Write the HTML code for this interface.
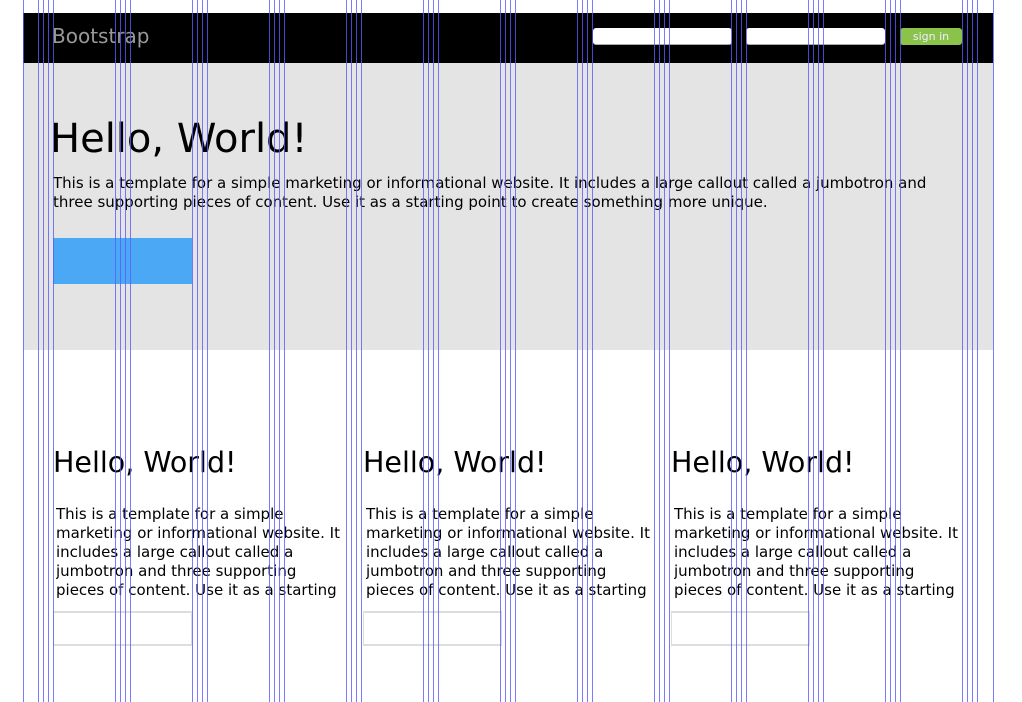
<!DOCTYPE html>
<html><head><meta charset="utf-8"><style>
*{margin:0;padding:0;box-sizing:border-box}
body{width:1022px;height:702px;overflow:hidden;background:#fff;font-family:"DejaVu Sans","Liberation Sans",sans-serif;position:relative}
.nav{position:absolute;left:23px;top:13px;width:970px;height:50px;background:#000}
.brand{position:absolute;left:29px;top:11px;font-size:20px;color:#999}
.inp{position:absolute;top:15px;height:17px;width:139px;background:#fff;border-radius:3px;border-bottom:1px solid #aaa}
.btn{position:absolute;left:877px;top:15px;width:62px;height:17px;background:#8bc34a;border-radius:3px;color:#eef;font-size:11px;text-align:center;line-height:17px}
.jumbo{position:absolute;left:23px;top:63px;width:970px;height:287px;background:#e4e4e4}
h1{position:absolute;left:27px;top:53px;font-size:40px;font-weight:normal;color:#000}
.jp{position:absolute;left:30px;top:111px;width:910px;font-size:15px;line-height:19px;color:#000}
.bb{position:absolute;left:30px;top:175px;width:139px;height:46px;background:#4aa8f5}
.col{position:absolute;top:446px;width:295px}
h2{font-size:28.5px;font-weight:normal;color:#000;line-height:34px}
.cp{margin-top:25px;margin-left:3px;width:290px;font-size:15px;line-height:19px;height:95px;overflow:hidden}
.box{margin-top:11px;width:139px;height:35px;border:1px solid #ddd;border-width:2px 1px}
.v{position:absolute;top:0;width:1px;height:702px;background:rgba(90,90,255,.8)}
</style></head><body>
<div class="nav"><div class="brand">Bootstrap</div>
<div class="inp" style="left:570px"></div><div class="inp" style="left:723px"></div>
<div class="btn">sign in</div></div>
<div class="jumbo"><h1>Hello, World!</h1>
<p class="jp">This is a template for a simple marketing or informational website. It includes a large callout called a jumbotron and three supporting pieces of content. Use it as a starting point to create something more unique.</p>
<div class="bb"></div></div>
<div class="col" style="left:53px"><h2>Hello, World!</h2><p class="cp">This is a template for a simple marketing or informational website. It includes a large callout called a jumbotron and three supporting pieces of content. Use it as a starting point to create something more unique.</p><div class="box"></div></div>
<div class="col" style="left:363px"><h2>Hello, World!</h2><p class="cp">This is a template for a simple marketing or informational website. It includes a large callout called a jumbotron and three supporting pieces of content. Use it as a starting point to create something more unique.</p><div class="box"></div></div>
<div class="col" style="left:671px"><h2>Hello, World!</h2><p class="cp">This is a template for a simple marketing or informational website. It includes a large callout called a jumbotron and three supporting pieces of content. Use it as a starting point to create something more unique.</p><div class="box"></div></div>
<div class="v" style="left:23px"></div><div class="v" style="left:993px"></div>
<div class="v" style="left:38px"></div><div class="v" style="left:43px"></div><div class="v" style="left:48px"></div><div class="v" style="left:53px"></div>
<div class="v" style="left:115px"></div><div class="v" style="left:120px"></div><div class="v" style="left:125px"></div><div class="v" style="left:130px"></div>
<div class="v" style="left:192px"></div><div class="v" style="left:197px"></div><div class="v" style="left:202px"></div><div class="v" style="left:207px"></div>
<div class="v" style="left:269px"></div><div class="v" style="left:274px"></div><div class="v" style="left:279px"></div><div class="v" style="left:284px"></div>
<div class="v" style="left:346px"></div><div class="v" style="left:351px"></div><div class="v" style="left:356px"></div><div class="v" style="left:361px"></div>
<div class="v" style="left:423px"></div><div class="v" style="left:428px"></div><div class="v" style="left:433px"></div><div class="v" style="left:438px"></div>
<div class="v" style="left:500px"></div><div class="v" style="left:505px"></div><div class="v" style="left:510px"></div><div class="v" style="left:515px"></div>
<div class="v" style="left:577px"></div><div class="v" style="left:582px"></div><div class="v" style="left:587px"></div><div class="v" style="left:592px"></div>
<div class="v" style="left:654px"></div><div class="v" style="left:659px"></div><div class="v" style="left:664px"></div><div class="v" style="left:669px"></div>
<div class="v" style="left:731px"></div><div class="v" style="left:736px"></div><div class="v" style="left:741px"></div><div class="v" style="left:746px"></div>
<div class="v" style="left:808px"></div><div class="v" style="left:813px"></div><div class="v" style="left:818px"></div><div class="v" style="left:823px"></div>
<div class="v" style="left:885px"></div><div class="v" style="left:890px"></div><div class="v" style="left:895px"></div><div class="v" style="left:900px"></div>
<div class="v" style="left:962px"></div><div class="v" style="left:967px"></div><div class="v" style="left:972px"></div><div class="v" style="left:977px"></div>
</body></html>
